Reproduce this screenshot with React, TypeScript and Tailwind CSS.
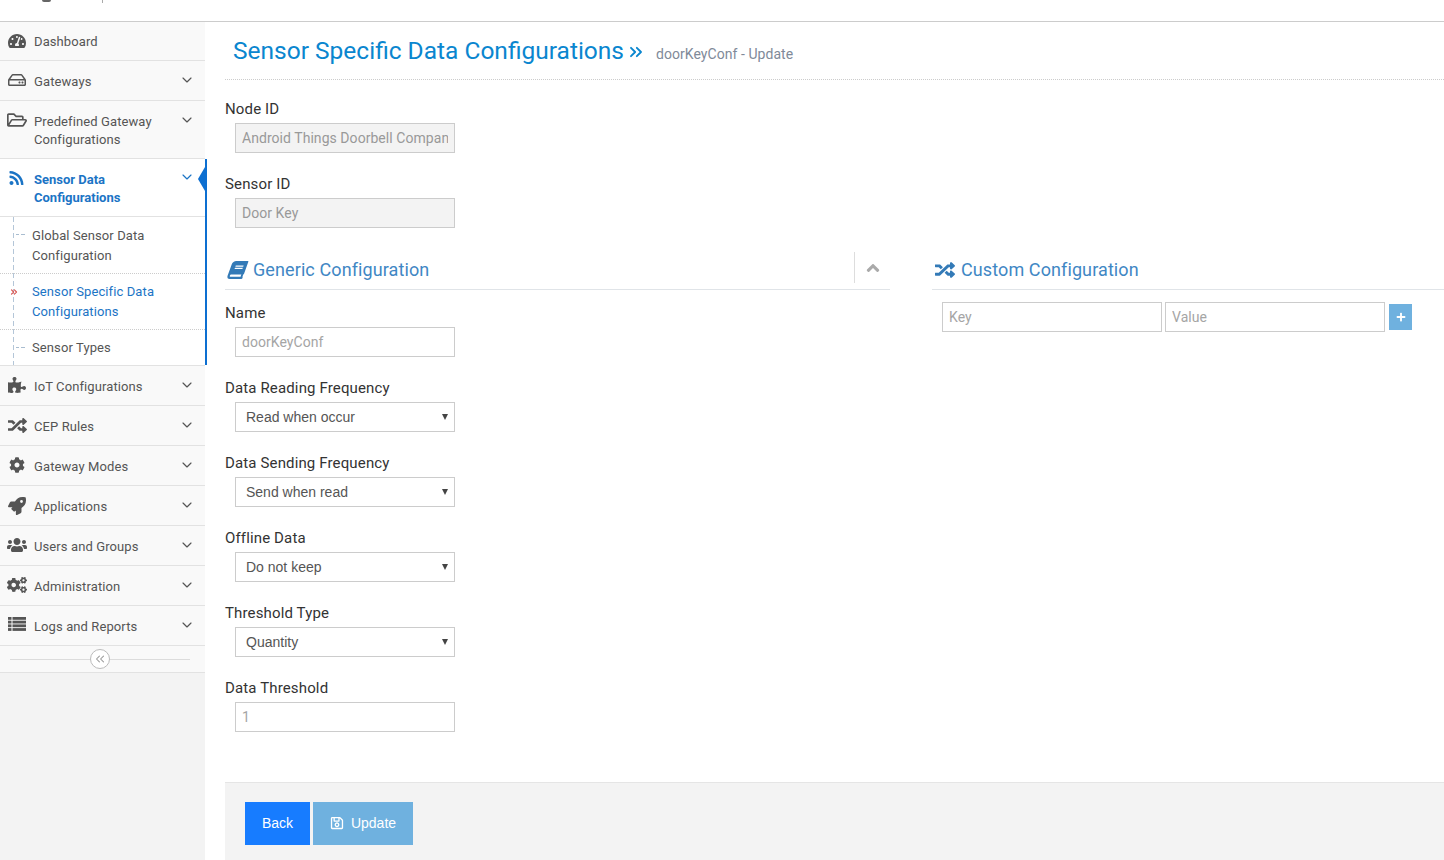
import React from 'react';
import type { IconType } from 'react-icons';
import {
    FaAngleUp,
    FaBook,
    FaCog,
    FaCogs,
    FaPlus,
    FaPuzzlePiece,
    FaRandom,
    FaRegFolderOpen,
    FaRegHdd,
    FaRegSave,
    FaRocket,
    FaRss,
    FaTachometerAlt,
    FaUsers,
} from 'react-icons/fa';
import { ChevronDown, ChevronsLeft, ChevronsRight } from 'lucide-react';

// fa-list from the old icon set: square + bar on each row
const ListIcon: IconType = ({ className }) => (
    <svg viewBox="0 0 18 14" className={className} fill="currentColor">
        <rect x="0" y="0" width="3.5" height="2.8" />
        <rect x="4.5" y="0" width="13.5" height="2.8" />
        <rect x="0" y="3.7" width="3.5" height="2.8" />
        <rect x="4.5" y="3.7" width="13.5" height="2.8" />
        <rect x="0" y="7.4" width="3.5" height="2.8" />
        <rect x="4.5" y="7.4" width="13.5" height="2.8" />
        <rect x="0" y="11.1" width="3.5" height="2.8" />
        <rect x="4.5" y="11.1" width="13.5" height="2.8" />
    </svg>
);

const TallRandom: IconType = ({ className }) => <FaRandom className={className} preserveAspectRatio="none" />;

interface MenuItemProps {
    icon: IconType;
    label: React.ReactNode;
    chevron?: boolean;
    className?: string;
    iconClass?: string;
    labelClass?: string;
}

const MenuItem: React.FC<MenuItemProps> = ({ icon: Icon, label, chevron = true, className = 'h-10', iconClass = 'w-[18px] h-4', labelClass = 'pt-[12px]' }) => (
    <div className={`relative flex items-start border-b border-[#e2e2e2] bg-[#f9f9f9] pl-2 pr-[10px] ${className}`}>
        <div className="w-[26px] shrink-0 pt-[11px]">
            <Icon className={`text-[#555] ${iconClass}`} />
        </div>
        <div className={`flex-1 text-[13px] leading-[18px] tracking-[0.1px] text-[#555] ${labelClass}`}>{label}</div>
        {chevron && <ChevronDown className="mt-[11px] h-4 w-4 text-[#555]" strokeWidth={1.75} />}
    </div>
);

const SubItem: React.FC<{ label: React.ReactNode; active?: boolean; className: string }> = ({ label, active, className }) => (
    <div className={`relative pl-8 text-[13px] leading-5 tracking-[0.1px] ${active ? 'text-[#1b74c5]' : 'text-[#555]'} ${className}`}>
        {active ? (
            <ChevronsRight className="absolute left-[9px] top-[13px] h-[10px] w-[10px] text-[#d9534f]" strokeWidth={2.75} />
        ) : (
            <span className="absolute left-4 top-[17px] flex gap-[2px]">
                <span className="h-px w-[3px] bg-[#a9bdd0]" />
                <span className="h-px w-1 bg-[#a9bdd0]" />
            </span>
        )}
        {label}
    </div>
);

const Sidebar: React.FC = () => (
    <aside className="w-[205px] shrink-0 bg-[#f3f3f3]">
        <MenuItem icon={FaTachometerAlt} label="Dashboard" chevron={false} className="h-[39px]" labelClass="pt-[11px]" />
        <MenuItem icon={FaRegHdd} label="Gateways" />
        <MenuItem
            icon={FaRegFolderOpen}
            label={<>Predefined Gateway<br />Configurations</>}
            className="h-[58px]"
            iconClass="w-5 h-[18px] -ml-[1px] -mt-[1px]"
        />
        <div className="relative w-[207px] border-r-2 border-[#0d6fd1] bg-white">
            <div className="flex h-[58px] items-start border-b border-[#e2e2e2] pl-2 pr-[10px]">
                <div className="w-[26px] shrink-0 pt-[11px]">
                    <FaRss className="h-4 w-4 pl-[1px] text-[#1b74c5]" />
                </div>
                <div className="flex-1 pt-[12px] text-[13px] font-bold leading-[18px] text-[#1b74c5]">
                    Sensor Data<br />Configurations
                </div>
                <ChevronDown className="mt-[10px] h-4 w-4 text-[#1b74c5]" strokeWidth={1.75} />
            </div>
            <span className="absolute right-0 top-[8px] h-[24px] w-[7px] bg-[#0d6fd1] [clip-path:polygon(100%_0,100%_100%,0_50%)]" />
            <div className="relative">
                <span className="absolute bottom-0 left-[13px] top-0 w-px bg-[repeating-linear-gradient(to_bottom,#b4c6d8_0,#b4c6d8_5px,transparent_5px,transparent_8px)]" />
                <SubItem label={<>Global Sensor Data<br />Configuration</>} className="h-[57px] border-b border-dotted border-[#ccc] pt-[9px]" />
                <SubItem label={<>Sensor Specific Data<br />Configurations</>} active className="h-[56px] border-b border-dotted border-[#ccc] pt-2" />
                <SubItem label="Sensor Types" className="h-[35px] pt-2" />
            </div>
        </div>
        <div className="border-t border-[#e2e2e2]" />
        <MenuItem icon={FaPuzzlePiece} label="IoT Configurations" />
        <MenuItem icon={TallRandom} label="CEP Rules" iconClass="w-[19px] h-[17px]" />
        <MenuItem icon={FaCog} label="Gateway Modes" />
        <MenuItem icon={FaRocket} label="Applications" iconClass="w-[18px] h-[18px]" />
        <MenuItem icon={FaUsers} label="Users and Groups" iconClass="w-5 h-[20px] -ml-[1px] -mt-[2px]" />
        <MenuItem icon={FaCogs} label="Administration" iconClass="w-5 h-[18px] -ml-[1px] -mt-[1px]" />
        <MenuItem icon={ListIcon} label="Logs and Reports" iconClass="w-[18px] h-[14px]" />
        <div className="relative flex h-[27px] items-center justify-center border-b border-[#e2e2e2] bg-[#f9f9f9] pl-[10px] pr-[15px]">
            <div className="w-full border-t border-[#dcdcdc]" />
            <div className="absolute left-[90px] top-[3px] flex h-5 w-5 items-center justify-center rounded-full border border-[#bbb] bg-white">
                <ChevronsLeft className="h-[14px] w-[14px] text-[#999]" strokeWidth={1.75} />
            </div>
        </div>
    </aside>
);

const TextField: React.FC<{ value?: string; placeholder?: string; disabled?: boolean; className?: string }> = ({ value, placeholder, disabled, className = 'w-[220px]' }) => (
    <input
        readOnly
        value={value}
        placeholder={placeholder}
        className={`h-[30px] border border-[#ccc] px-[6px] text-sm tracking-[0.05px] text-[#999] outline-none placeholder:text-[#a5a5a5] ${disabled ? 'bg-[#f3f3f3]' : 'bg-white'} ${className}`}
    />
);

const Field: React.FC<{ label: string; children: React.ReactNode }> = ({ label, children }) => (
    <div className="mb-5">
        <div className="mb-[5px] h-5 text-[15px] leading-[22px] tracking-[0.14px] text-[#333]">{label}</div>
        <div className="pl-[10px]">{children}</div>
    </div>
);

const SelectField: React.FC<{ value: string }> = ({ value }) => (
    <div className="relative w-[220px]">
        <select
            value={value}
            onChange={() => undefined}
            className="block h-[30px] w-full appearance-none border border-[#ccc] bg-white pl-[10px] text-sm text-[#555] outline-none [font-family:'Liberation_Sans',sans-serif]"
        >
            <option>{value}</option>
        </select>
        <span className="absolute right-[7px] top-[12px] h-[6px] w-[6px] bg-[#444] [clip-path:polygon(0_0,100%_0,50%_100%)]" />
    </div>
);

const App: React.FC = () => (
    <div className="h-[860px] overflow-hidden bg-white [font-family:Roboto,sans-serif]">
        <header className="relative h-[22px] border-b border-[#ccc] bg-white">
            <span className="absolute left-[42px] top-0 h-[2px] w-[9px] rounded-b-full bg-[#666]" />
            <span className="absolute left-[102px] top-0 h-[3px] w-px bg-[#aaa]" />
        </header>
        <div className="flex h-[838px]">
            <Sidebar />
            <main className="min-w-0 flex-1 pl-5">
                <div className="flex h-[58px] items-center border-b border-dotted border-[#ccc] pl-2 pt-[1px]">
                    <h1 className="text-[24.5px] font-normal leading-[30px] text-[#0a86cf]">Sensor Specific Data Configurations</h1>
                    <ChevronsRight className="ml-[2px] mt-[1px] h-[20px] w-[20px] text-[#0a86cf]" strokeWidth={2.25} />
                    <span className="ml-[10px] mt-[6px] text-sm tracking-[0.05px] text-[#7f8a99]">doorKeyConf - Update</span>
                </div>
                <div className="pt-[18px]">
                    <Field label="Node ID">
                        <TextField value="Android Things Doorbell Companion" disabled />
                    </Field>
                    <Field label="Sensor ID">
                        <TextField value="Door Key" disabled />
                    </Field>
                    <div className="flex">
                        <section className="w-[665px] shrink-0">
                            <div className="mb-3 flex h-[42px] items-center border-b border-[#e0e4e8] pt-[3px]">
                                <FaBook className="ml-[3px] h-[18px] w-[19px] -skew-x-[20deg] text-[#337ab7]" />
                                <h2 className="ml-[6px] flex-1 text-lg font-normal tracking-[0.1px] text-[#3f87c4]">Generic Configuration</h2>
                                <div className="-mt-[5px] flex h-[31px] w-[36px] items-center justify-center border-l border-[#ddd]">
                                    <FaAngleUp className="h-5 w-5 text-[#aaa]" />
                                </div>
                            </div>
                            <Field label="Name">
                                <TextField placeholder="doorKeyConf" />
                            </Field>
                            <Field label="Data Reading Frequency">
                                <SelectField value="Read when occur" />
                            </Field>
                            <Field label="Data Sending Frequency">
                                <SelectField value="Send when read" />
                            </Field>
                            <Field label="Offline Data">
                                <SelectField value="Do not keep" />
                            </Field>
                            <Field label="Threshold Type">
                                <SelectField value="Quantity" />
                            </Field>
                            <Field label="Data Threshold">
                                <TextField placeholder="1" />
                            </Field>
                        </section>
                        <section className="ml-[42px] flex-1">
                            <div className="mb-3 flex h-[42px] items-center border-b border-[#e0e4e8] pl-[3px] pt-[3px]">
                                <FaRandom className="h-[18px] w-5 text-[#337ab7]" preserveAspectRatio="none" />
                                <h2 className="ml-[6px] text-lg font-normal tracking-[0.1px] text-[#3f87c4]">Custom Configuration</h2>
                            </div>
                            <div className="flex items-center pl-[10px]">
                                <TextField placeholder="Key" />
                                <TextField placeholder="Value" className="ml-[3px] w-[220px]" />
                                <button className="ml-1 flex h-[26px] w-[23px] items-center justify-center bg-[#6fb1df] text-white">
                                    <FaPlus className="h-[10px] w-[10px]" />
                                </button>
                            </div>
                        </section>
                    </div>
                    <footer className="mt-[30px] flex h-[90px] gap-[3px] border-t border-[#e5e5e5] bg-[#f3f3f3] pl-5 pt-[19px] [font-family:'Liberation_Sans',sans-serif]">
                        <button className="h-[43px] w-[65px] bg-[#177cff] pb-px text-sm text-white">Back</button>
                        <button className="flex h-[43px] w-[100px] items-center justify-center gap-[7px] bg-[#6fb1df] pb-px text-sm text-white">
                            <FaRegSave className="h-[14px] w-[14px]" />
                            Update
                        </button>
                    </footer>
                </div>
            </main>
        </div>
    </div>
);

export default App;
